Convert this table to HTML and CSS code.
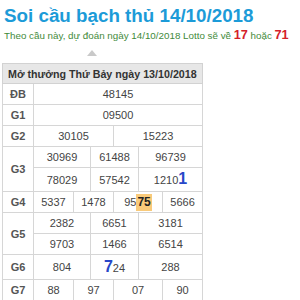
FILE: index.html
```html
<!DOCTYPE html>
<html lang="vi">
<head>
<meta charset="utf-8">
<link rel="stylesheet" href="styles.css">
</head>
<body>
<h1 class="title">Soi cầu bạch thủ 14/10/2018</h1>
<p class="sub">Theo cầu này, dự đoán ngày 14/10/2018 Lotto sẽ về <b class="hot">17</b> hoặc <b class="hot">71</b></p>
<div class="arrow"></div>
<table class="kq">
  <colgroup>
    <col class="c0"><col class="c1"><col class="c2"><col class="c3"><col class="c4"><col class="c5"><col class="c6">
  </colgroup>
  <thead>
    <tr><th colspan="7">Mở thưởng Thứ Bảy ngày 13/10/2018</th></tr>
  </thead>
  <tbody>
    <tr><td class="lb">ĐB</td><td colspan="6">48145</td></tr>
    <tr><td class="lb">G1</td><td colspan="6">09500</td></tr>
    <tr><td class="lb">G2</td><td colspan="3">30105</td><td colspan="3">15223</td></tr>
    <tr><td class="lb" rowspan="2">G3</td><td colspan="2">30969</td><td colspan="2">61488</td><td colspan="2">96739</td></tr>
    <tr class="tall"><td colspan="2">78029</td><td colspan="2">57542</td><td colspan="2">1210<span class="big">1</span></td></tr>
    <tr><td class="lb">G4</td><td>5337</td><td colspan="2">1478</td><td colspan="2">95<span class="mark">75</span></td><td>5666</td></tr>
    <tr><td class="lb" rowspan="2">G5</td><td colspan="2">2382</td><td colspan="2">6651</td><td colspan="2">3181</td></tr>
    <tr><td colspan="2">9703</td><td colspan="2">1466</td><td colspan="2">6514</td></tr>
    <tr class="tall2"><td class="lb">G6</td><td colspan="2">804</td><td colspan="2"><span class="big">7</span>24</td><td colspan="2">288</td></tr>
    <tr><td class="lb">G7</td><td>88</td><td colspan="2">97</td><td colspan="2">07</td><td>90</td></tr>
  </tbody>
</table>
</body>
</html>
```

FILE: styles.css
```css
html, body {
  margin: 0;
  padding: 0;
  background: #fff;
}
body {
  padding: 0 2px;
  font-family: "Liberation Sans", Arial, sans-serif;
}
.title {
  margin: 5px 0 0 2px;
  font-size: 18.8px;
  line-height: 22px;
  font-weight: bold;
  color: #1c9bd8;
}
.sub {
  margin: 1px 0 0 2px;
  font-size: 9.8px;
  line-height: 14px;
  color: #3f8a3a;
  white-space: nowrap;
}
.hot {
  font-size: 12.7px;
  color: #d4202a;
}
.arrow {
  width: 0;
  height: 0;
  margin: 7px 0 0 85px;
  border-left: 5px solid transparent;
  border-right: 5px solid transparent;
  border-bottom: 6px solid #c9c9c9;
}
.kq {
  margin-top: 7px;
  width: 201px;
  border-collapse: collapse;
  table-layout: fixed;
  font-size: 11px;
  color: #444;
}
.c0 { width: 31px; }
.c1 { width: 40px; }
.c2 { width: 17px; }
.c3 { width: 23px; }
.c4 { width: 25px; }
.c5 { width: 24px; }
.c6 { width: 40px; }
.kq th {
  background: #e7e7e7;
  border: 1px solid #d2d2d2;
  height: 19px;
  padding: 0 0 0 5px;
  font-size: 10.7px;
  font-weight: bold;
  color: #333;
  text-align: left;
  white-space: nowrap;
}
.kq td {
  border: 1px solid #d6d6d6;
  height: 20px;
  padding: 0;
  line-height: 20px;
  text-align: center;
  white-space: nowrap;
}
.kq td.lb {
  font-weight: bold;
  color: #555;
}
.tall td { height: 23px; }
.tall2 td { height: 24px; }
.big {
  font-size: 16px;
  font-weight: bold;
  color: #2847c8;
  line-height: 20px;
}
.mark {
  background: #f9ca7a;
  font-weight: bold;
  font-size: 12px;
  color: #222;
  padding: 1px 1px 2px;
}
```
